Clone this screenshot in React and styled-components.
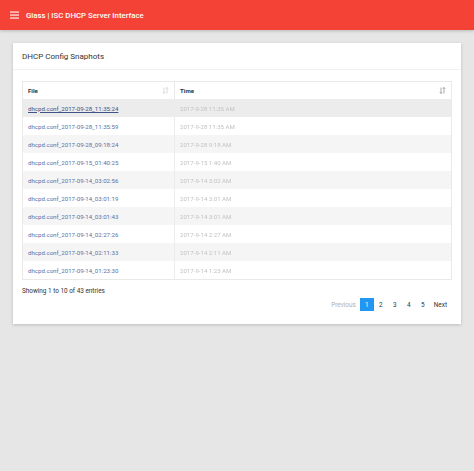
import React from "react";
import styled, { createGlobalStyle } from "styled-components";

const GlobalStyle = createGlobalStyle`
  html, body {
    margin: 0;
    padding: 0;
    background: #e6e6e6;
    font-family: Roboto, "Liberation Sans", sans-serif;
  }
`;

const Page = styled.div`
  min-height: 471px;
  background: #e6e6e6;
`;

const AppBar = styled.header`
  height: 30px;
  background: #f44336;
  display: flex;
  align-items: center;
  padding-left: 10px;
  gap: 7px;
  box-shadow: 0 1px 3px rgba(0, 0, 0, 0.2);
`;

const Title = styled.span`
  color: #fff;
  font-size: 7.8px;
  font-weight: 500;
`;

const Main = styled.main`
  padding: 13px;
`;

const Card = styled.section`
  background: #fff;
  box-shadow: 0 1px 3px rgba(0, 0, 0, 0.18);
`;

const CardTitle = styled.div`
  height: 26px;
  display: flex;
  align-items: center;
  padding: 0 9px;
  font-size: 8px;
  color: #333;
  border-bottom: 1px solid #f1f1f1;
`;

const CardBody = styled.div`
  padding: 11px 9px 13px;
`;

const Table = styled.table`
  width: 100%;
  border-collapse: collapse;
  border: 1px solid #e9e9e9;
  font-size: 6.1px;
`;

const Th = styled.th`
  height: 17px;
  text-align: left;
  font-weight: 700;
  color: #333;
  padding: 0 5px;
  border-left: ${(p) => (p.$first ? "none" : "1px solid #e9e9e9")};
  width: ${(p) => p.$w || "auto"};
`;

const HeadInner = styled.div`
  display: flex;
  align-items: center;
  justify-content: space-between;
`;

const Row = styled.tr`
  background: ${(p) => (p.$hover ? "#ececec" : p.$odd ? "#f5f5f5" : "#fff")};
`;

const Td = styled.td`
  height: 18px;
  padding: 0 5px;
  border-left: ${(p) => (p.$first ? "none" : "1px solid #ececec")};
`;

const FileLink = styled.a`
  color: ${(p) => (p.$hover ? "#3f5285" : "#5870a6")};
  text-decoration: ${(p) => (p.$hover ? "underline" : "none")};
`;

const Blurred = styled.span`
  color: #c2c2c2;
  filter: blur(0.7px);
`;

const Info = styled.div`
  margin-top: 7px;
  font-size: 6.4px;
  color: #333;
`;

const Pager = styled.div`
  display: flex;
  justify-content: flex-end;
  align-items: center;
  margin-top: 3px;
  padding-right: 1px;
`;

const PageBtn = styled.span`
  min-width: ${(p) => (p.$wide ? "auto" : "14px")};
  height: 13px;
  padding: 0 ${(p) => (p.$wide ? "4px" : "0")};
  display: flex;
  align-items: center;
  justify-content: center;
  font-size: 6.4px;
  color: ${(p) => (p.$active ? "#fff" : p.$disabled ? "#b0b0b0" : "#333")};
  background: ${(p) => (p.$active ? "#2196f3" : "transparent")};
`;

const Menu = () => (
  <svg width="9" height="8" viewBox="0 0 9 8">
    <rect x="0" y="0.5" width="9" height="1.1" fill="#fff" />
    <rect x="0" y="3.5" width="9" height="1.1" fill="#fff" />
    <rect x="0" y="6.5" width="9" height="1.1" fill="#fff" />
  </svg>
);

const SortIcon = ({ active }) => (
  <svg width="7" height="7" viewBox="0 0 7 7">
    <path
      d="M2 0.5V6.5M0.8 5.2L2 6.5L3.2 5.2M5 6.5V0.5M3.8 1.8L5 0.5L6.2 1.8"
      stroke={active ? "#888" : "#ccc"}
      strokeWidth="0.7"
      fill="none"
    />
  </svg>
);

const rows = [
  ["dhcpd.conf_2017-09-28_11:35:24", "2017-9-28 11:35 AM"],
  ["dhcpd.conf_2017-09-28_11:35:59", "2017-9-28 11:35 AM"],
  ["dhcpd.conf_2017-09-28_09:18:24", "2017-9-28 9:18 AM"],
  ["dhcpd.conf_2017-09-15_01:40:25", "2017-9-15 1:40 AM"],
  ["dhcpd.conf_2017-09-14_03:02:56", "2017-9-14 3:02 AM"],
  ["dhcpd.conf_2017-09-14_03:01:19", "2017-9-14 3:01 AM"],
  ["dhcpd.conf_2017-09-14_03:01:43", "2017-9-14 3:01 AM"],
  ["dhcpd.conf_2017-09-14_02:27:26", "2017-9-14 2:27 AM"],
  ["dhcpd.conf_2017-09-14_02:11:33", "2017-9-14 2:11 AM"],
  ["dhcpd.conf_2017-09-14_01:23:30", "2017-9-14 1:23 AM"],
];

export default function App() {
  return (
    <Page>
      <GlobalStyle />
      <AppBar>
        <Menu />
        <Title>Glass | ISC DHCP Server Interface</Title>
      </AppBar>
      <Main>
        <Card>
          <CardTitle>DHCP Config Snaphots</CardTitle>
          <CardBody>
            <Table>
              <thead>
                <tr>
                  <Th $first $w="141px">
                    <HeadInner>
                      File <SortIcon />
                    </HeadInner>
                  </Th>
                  <Th>
                    <HeadInner>
                      Time <SortIcon active />
                    </HeadInner>
                  </Th>
                </tr>
              </thead>
              <tbody>
                {rows.map(([file, time], i) => (
                  <Row key={file} $odd={i % 2 === 0} $hover={i === 0}>
                    <Td $first>
                      <FileLink href="#" $hover={i === 0}>
                        {file}
                      </FileLink>
                    </Td>
                    <Td>
                      <Blurred>{time}</Blurred>
                    </Td>
                  </Row>
                ))}
              </tbody>
            </Table>
            <Info>Showing 1 to 10 of 43 entries</Info>
            <Pager>
              <PageBtn $wide $disabled>Previous</PageBtn>
              <PageBtn $active>1</PageBtn>
              <PageBtn>2</PageBtn>
              <PageBtn>3</PageBtn>
              <PageBtn>4</PageBtn>
              <PageBtn>5</PageBtn>
              <PageBtn $wide>Next</PageBtn>
            </Pager>
          </CardBody>
        </Card>
      </Main>
    </Page>
  );
}
